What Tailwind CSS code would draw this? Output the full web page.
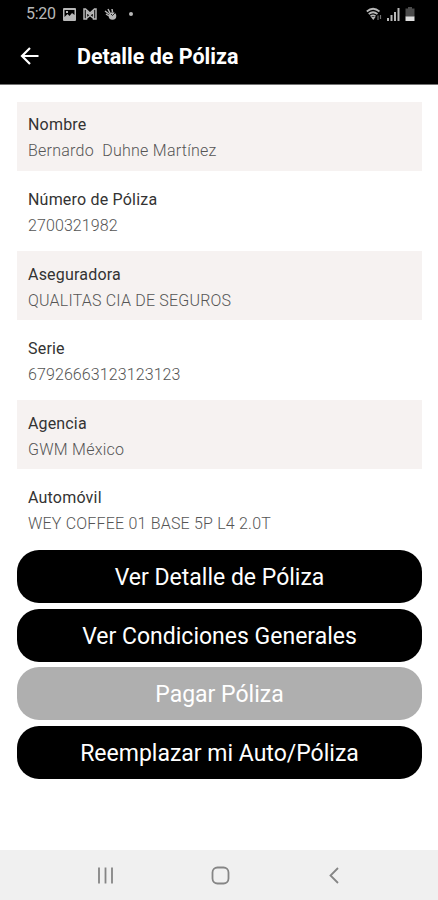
<!DOCTYPE html>
<html lang="es">
  <head>
    <meta charset="UTF-8" />
    <meta name="viewport" content="width=device-width, initial-scale=1.0" />
    <title>Detalle de Póliza</title>
    <script src="https://cdn.jsdelivr.net/npm/@tailwindcss/browser@4"></script>
  </head>
  <body class="bg-white font-['Roboto',sans-serif]">
    <div class="flex flex-col h-[900px] overflow-hidden">
      <!-- Header -->
      <header class="h-[85px] shrink-0 bg-black border-b border-neutral-500">
        <div class="flex items-center h-7 pl-[26px] pr-[23px] text-[#b8b8b8]">
          <span class="w-[30px] text-[16px] tracking-[-0.3px] leading-7">5:20</span>
          <svg class="w-[13px] h-[13px] ml-[7px]" viewBox="0 0 13 13">
            <path fill="currentColor" fill-rule="evenodd" d="M1 0h11a1 1 0 011 1v11a1 1 0 01-1 1H1a1 1 0 01-1-1V1a1 1 0 011-1zM1.500 2v7l3-3 2 2L9 5l2.500 2V2zM3 3h2v2H3z"></path>
          </svg>
          <svg class="w-[14px] h-[12px] ml-[7px]" fill="none" stroke="currentColor" viewBox="0 0 14 12">
            <path stroke-width="1.500" d="M1 1v10h2.500V4L7 7l3.500-3v7H13V1h-1.500L7 5 2.500 1zM4 10l3-2.500L10 10"></path>
          </svg>
          <svg class="w-[13px] h-[13px] ml-[7px]" viewBox="0 0 13 13">
            <circle cx="8.500" cy="8" r="3.800" fill="currentColor"></circle>
            <path fill="none" stroke="currentColor" stroke-width="1.500" d="M1 3l4 3M4 1l2 4M8 1l.5 3M2 6l3 2"></path>
            <path fill="none" stroke="#000" stroke-width=".8" d="M7 6l1.500 1.500L11 5"></path>
          </svg>
          <span class="w-1 h-1 ml-[12px] rounded-full bg-current"></span>
          <svg class="w-[17px] h-[15px] ml-auto" fill="none" stroke="currentColor" viewBox="0 0 17 15">
            <path stroke-width="1.700" d="M.8 4.500Q7 -1 13.500 4.500M2.700 7Q7 3.500 11.500 7M4.500 9.200Q7 7.500 9.500 9.200"></path>
            <path fill="currentColor" stroke="none" d="M5 10h4.500L7.300 13z"></path>
            <path stroke-width="1.200" class="opacity-60" d="M12 13V8.500M14.500 12V8"></path>
          </svg>
          <svg class="w-[13px] h-[14px] ml-1" fill="currentColor" viewBox="0 0 13 14">
            <path d="M0 11h2v3H0zM3.500 8h2v6h-2zM7 5h2v9H7zM10.500 1h2v13h-2z"></path>
          </svg>
          <svg class="w-[10px] h-[14px] ml-[5px]" viewBox="0 0 10 14">
            <path fill="#4b4b4b" d="M3 0h4v1.500h2.500V10H.5V1.500H3z"></path>
            <path fill="#dedede" d="M.5 9.500h9V14h-9z"></path>
          </svg>
        </div>
        <div class="flex items-center h-[56px] pl-5 text-white">
          <svg class="w-5 h-5" fill="none" stroke="currentColor" viewBox="0 0 20 20">
            <path stroke-width="2.200" d="M18.500 10H2.500M10 2L2 10l8 8"></path>
          </svg>
          <h1 class="ml-[37px] pt-[3px] text-[21.500px] font-bold">Detalle de Póliza</h1>
        </div>
      </header>

      <main class="flex-1 pt-[16.500px] pl-[17px] pr-4">
        <!-- Policy data -->
        <dl class="flex flex-col gap-[5px] text-[16px] leading-[26px]">
          <div class="h-[69.600px] pt-[10.500px] pl-[11px] bg-[#f6f2f1]">
            <dt class="text-[#333] tracking-[0.2px]">Nombre</dt>
            <dd class="text-[#555] font-light tracking-[0.25px] whitespace-pre">Bernardo  Duhne Martínez</dd>
          </div>
          <div class="h-[69.600px] pt-[11px] pl-[11px]">
            <dt class="text-[#333] tracking-[0.2px]">Número de Póliza</dt>
            <dd class="text-[#555] font-light tracking-[0.1px]">2700321982</dd>
          </div>
          <div class="h-[69.600px] pt-[11px] pl-[11px] bg-[#f6f2f1]">
            <dt class="text-[#333] tracking-[0.2px]">Aseguradora</dt>
            <dd class="text-[#555] font-light tracking-[0.2px]">QUALITAS CIA DE SEGUROS</dd>
          </div>
          <div class="h-[69.600px] pt-[11px] pl-[11px]">
            <dt class="text-[#333] tracking-[0.2px]">Serie</dt>
            <dd class="text-[#555] font-light tracking-[0.1px]">67926663123123123</dd>
          </div>
          <div class="h-[69.600px] pt-[11px] pl-[11px] bg-[#f6f2f1]">
            <dt class="text-[#333] tracking-[0.15px]">Agencia</dt>
            <dd class="text-[#555] font-light tracking-[0.25px]">GWM México</dd>
          </div>
          <div class="h-[69.600px] pt-[11px] pl-[11px]">
            <dt class="text-[#333] tracking-[0.2px]">Automóvil</dt>
            <dd class="text-[#555] font-light tracking-[0.2px]">WEY COFFEE 01 BASE 5P L4 2.0T</dd>
          </div>
        </dl>

        <!-- Actions -->
        <div class="flex flex-col gap-[5.500px] mt-[6px] text-[23px] text-white">
          <button class="h-[53px] pt-1 rounded-[22px] bg-black">Ver Detalle de Póliza</button>
          <button class="h-[53px] pt-1 rounded-[22px] bg-black">Ver Condiciones Generales</button>
          <button class="h-[53px] pt-1 rounded-[22px] bg-[#afafaf]" disabled>Pagar Póliza</button>
          <button class="h-[53px] pt-1 rounded-[22px] bg-black">Reemplazar mi Auto/Póliza</button>
        </div>
      </main>

      <!-- System navigation -->
      <nav class="flex items-center h-[50px] shrink-0 bg-[#f0f0f0] pl-[97px] text-[#858585]">
        <svg class="w-[17px] h-[17px]" fill="none" stroke="currentColor" viewBox="0 0 17 17">
          <path stroke-width="1.800" d="M2 .5v16M8.500 .5v16M15 .5v16"></path>
        </svg>
        <svg class="w-[19px] h-[19px] ml-[97px]" fill="none" stroke="currentColor" viewBox="0 0 19 19">
          <rect x="1.500" y="1.500" width="16" height="16" rx="5" stroke-width="1.800"></rect>
        </svg>
        <svg class="w-[10px] h-[17px] ml-[99px]" fill="none" stroke="currentColor" viewBox="0 0 10 17">
          <path stroke-width="1.800" d="M9 1L1.500 8.500 9 16"></path>
        </svg>
      </nav>
    </div>
  </body>
</html>
